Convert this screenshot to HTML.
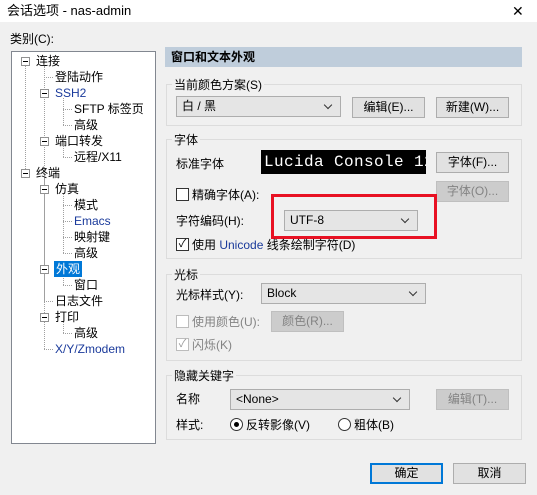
<!DOCTYPE html>
<html><head><meta charset="utf-8"><style>
*{margin:0;padding:0;box-sizing:border-box}
body{width:537px;height:495px;background:#f0f0f0;position:relative;overflow:hidden;font-family:"Liberation Sans","Noto Sans CJK SC",sans-serif;font-size:12px;color:#000}
.a{position:absolute;white-space:nowrap;line-height:16px}
.title{position:absolute;left:0;top:0;width:537px;height:22px;background:#fff}
.tree{position:absolute;left:11px;top:51px;width:145px;height:393px;background:#fff;border:1px solid #828790}
.hdr{position:absolute;left:165px;top:47px;width:357px;height:20px;background:#bfcddb;font-weight:bold;padding-left:6px;line-height:20px}
.grp{position:absolute;border:1px solid #dcdcdc;left:166px;width:356px}
.gl{position:absolute;background:#f0f0f0;padding:0 2px;line-height:14px}
.btn{position:absolute;background:#e1e1e1;border:1px solid #adadad;text-align:center;line-height:19px;height:21px}
.dis{background:#cccccc;border-color:#bfbfbf;color:#838383}
.cmb{position:absolute;background:#e5e5e5;border:1px solid #adadad;height:21px;line-height:19px;padding-left:5px}
.cmb::after{content:"";position:absolute;right:9px;top:5px;width:5px;height:5px;border-right:1px solid #333;border-bottom:1px solid #333;transform:rotate(45deg)}
.cb{position:absolute;width:13px;height:13px;border:1px solid #333;background:#fff}
.pb{position:absolute;width:9px;height:9px;border:1px solid #919191;background:#fff}
.pb::before{content:"";position:absolute;left:1px;top:3px;width:5px;height:1px;background:#000}
.dl{position:absolute;border-left:1px dotted #a0a0a0}
.dh{position:absolute;border-top:1px dotted #a0a0a0;height:0}
.bl{color:#1a3a9b}
</style></head><body>
<div class="title"></div>
<div class="a" style="left:7px;top:3px;font-size:13px">会话选项 - nas-admin</div>
<div class="a" style="left:512px;top:3px;font-size:14px">✕</div>
<div class="a" style="left:10px;top:31px">类别(C):</div>
<div class="tree"></div>
<div class="dl" style="left:25px;top:66px;height:107px"></div>
<div class="dl" style="left:44px;top:66px;height:236px"></div>
<div class="dl" style="left:44px;top:178px;height:171px"></div>
<div class="dl" style="left:63px;top:98px;height:27px"></div>
<div class="dl" style="left:63px;top:146px;height:11px"></div>
<div class="dl" style="left:63px;top:194px;height:59px"></div>
<div class="dl" style="left:63px;top:274px;height:11px"></div>
<div class="dl" style="left:63px;top:322px;height:11px"></div>
<div class="dh" style="left:44px;top:77px;width:9px"></div>
<div class="dh" style="left:63px;top:109px;width:9px"></div>
<div class="dh" style="left:63px;top:125px;width:9px"></div>
<div class="dh" style="left:63px;top:157px;width:9px"></div>
<div class="dh" style="left:63px;top:205px;width:9px"></div>
<div class="dh" style="left:63px;top:221px;width:9px"></div>
<div class="dh" style="left:63px;top:237px;width:9px"></div>
<div class="dh" style="left:63px;top:253px;width:9px"></div>
<div class="dh" style="left:63px;top:285px;width:9px"></div>
<div class="dh" style="left:44px;top:301px;width:9px"></div>
<div class="dh" style="left:63px;top:333px;width:9px"></div>
<div class="dh" style="left:44px;top:349px;width:9px"></div>
<div class="pb" style="left:21px;top:57px"></div>
<div class="pb" style="left:40px;top:89px"></div>
<div class="pb" style="left:40px;top:137px"></div>
<div class="pb" style="left:21px;top:169px"></div>
<div class="pb" style="left:40px;top:185px"></div>
<div class="pb" style="left:40px;top:265px"></div>
<div class="pb" style="left:40px;top:313px"></div>
<div class="a" style="left:36px;top:53px">连接</div>
<div class="a" style="left:55px;top:69px">登陆动作</div>
<div class="a bl" style="left:55px;top:85px">SSH2</div>
<div class="a" style="left:74px;top:101px">SFTP 标签页</div>
<div class="a" style="left:74px;top:117px">高级</div>
<div class="a" style="left:55px;top:133px">端口转发</div>
<div class="a" style="left:74px;top:149px">远程/X11</div>
<div class="a" style="left:36px;top:165px">终端</div>
<div class="a" style="left:55px;top:181px">仿真</div>
<div class="a" style="left:74px;top:197px">模式</div>
<div class="a bl" style="left:74px;top:213px">Emacs</div>
<div class="a" style="left:74px;top:229px">映射键</div>
<div class="a" style="left:74px;top:245px">高级</div>
<div class="a" style="left:54px;top:261px;background:#0078d7;color:#fff;padding:0 2px">外观</div>
<div class="a" style="left:74px;top:277px">窗口</div>
<div class="a" style="left:55px;top:293px">日志文件</div>
<div class="a" style="left:55px;top:309px">打印</div>
<div class="a" style="left:74px;top:325px">高级</div>
<div class="a bl" style="left:55px;top:341px">X/Y/Zmodem</div>

<div class="hdr">窗口和文本外观</div>

<div class="grp" style="top:84px;height:42px"></div>
<div class="gl" style="left:172px;top:78px">当前颜色方案(S)</div>
<div class="cmb" style="left:176px;top:96px;width:165px">白 / 黑</div>
<div class="btn" style="left:352px;top:97px;width:73px">编辑(E)...</div>
<div class="btn" style="left:436px;top:97px;width:73px">新建(W)...</div>

<div class="grp" style="top:139px;height:120px"></div>
<div class="gl" style="left:172px;top:133px">字体</div>
<div class="a" style="left:176px;top:156px">标准字体</div>
<div class="a" style="left:261px;top:150px;width:165px;height:24px;background:#000;color:#fff;font-family:'Liberation Mono',monospace;font-size:16px;line-height:24px;padding-left:3px;overflow:hidden;letter-spacing:0.4px">Lucida Console 12</div>
<div class="btn" style="left:436px;top:152px;width:73px">字体(F)...</div>
<div class="cb" style="left:176px;top:188px"></div>
<div class="a" style="left:192px;top:187px">精确字体(A):</div>
<div class="btn dis" style="left:436px;top:181px;width:73px">字体(O)...</div>
<div class="a" style="left:176px;top:213px">字符编码(H):</div>
<div class="cmb" style="left:284px;top:210px;width:134px">UTF-8</div>
<div class="a" style="left:271px;top:194px;width:166px;height:45px;border:3px solid #e81123;background:transparent"></div>
<div class="cb" style="left:176px;top:238px;text-align:center;line-height:11px;font-size:11px">✓</div>
<div class="a" style="left:192px;top:237px">使用 <span class="bl">Unicode</span> 线条绘制字符(D)</div>

<div class="grp" style="top:274px;height:87px"></div>
<div class="gl" style="left:172px;top:268px">光标</div>
<div class="a" style="left:176px;top:287px">光标样式(Y):</div>
<div class="cmb" style="left:261px;top:283px;width:165px">Block</div>
<div class="cb" style="left:176px;top:315px;border-color:#bcbcbc"></div>
<div class="a" style="left:192px;top:314px;color:#838383">使用颜色(U):</div>
<div class="btn dis" style="left:271px;top:311px;width:73px">颜色(R)...</div>
<div class="cb" style="left:176px;top:338px;border-color:#bcbcbc;color:#999;text-align:center;line-height:11px;font-size:11px">✓</div>
<div class="a" style="left:192px;top:337px;color:#838383">闪烁(K)</div>

<div class="grp" style="top:375px;height:65px"></div>
<div class="gl" style="left:172px;top:369px">隐藏关键字</div>
<div class="a" style="left:176px;top:391px">名称</div>
<div class="cmb" style="left:230px;top:389px;width:180px">&lt;None&gt;</div>
<div class="btn dis" style="left:436px;top:389px;width:73px">编辑(T)...</div>
<div class="a" style="left:176px;top:417px">样式:</div>
<div class="a" style="left:230px;top:418px;width:13px;height:13px;border:1px solid #333;border-radius:50%;background:#fff"><div style="position:absolute;left:3px;top:3px;width:5px;height:5px;border-radius:50%;background:#000"></div></div>
<div class="a" style="left:246px;top:417px">反转影像(V)</div>
<div class="a" style="left:338px;top:418px;width:13px;height:13px;border:1px solid #333;border-radius:50%;background:#fff"></div>
<div class="a" style="left:354px;top:417px">粗体(B)</div>

<div class="btn" style="left:370px;top:463px;width:73px;border:2px solid #0078d7;line-height:17px">确定</div>
<div class="btn" style="left:453px;top:463px;width:73px">取消</div>
</body></html>
